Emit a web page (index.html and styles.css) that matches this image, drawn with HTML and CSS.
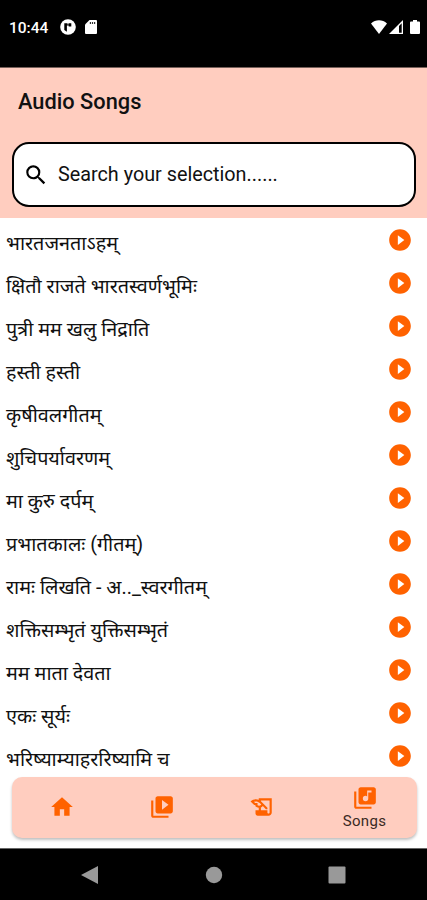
FILE: index.html
```html
<!DOCTYPE html>
<html lang="sa">
<head>
    <meta charset="UTF-8">
    <meta name="viewport" content="width=device-width, initial-scale=1.0">
    <title>Audio Songs</title>
    <link rel="stylesheet" href="styles.css">
</head>
<body>
    <!-- shared icon -->
    <svg class="sprite">
        <symbol id="play" viewBox="0 0 24 24">
            <path d="M12 2C6.48 2 2 6.48 2 12s4.48 10 10 10 10-4.48 10-10S17.52 2 12 2zm-2 14.5v-9l6 4.5-6 4.5z"/>
        </symbol>
    </svg>

    <div class="status-bar">
        <span class="clock">10:44</span>
        <svg class="status-app" viewBox="0 0 16 16">
            <circle cx="8" cy="8" r="7.8" fill="#fff"/>
            <path d="M4.3 4.2h3.2v1.300h1V4.200h2.800v3.200H8.700v-1H6.900v6.400L4.300 11z" fill="#000"/>
        </svg>
        <svg class="status-sd" viewBox="0 0 12 14">
            <path d="M4.5 0H11a1 1 0 0 1 1 1v12a1 1 0 0 1-1 1H1a1 1 0 0 1-1-1V4.500z" fill="#fff"/>
            <path d="M4.8 2h1.200v2H4.800zM6.900 2H8.100v2H6.900zM9 2h1.200v2H9z" fill="#333"/>
        </svg>
        <span class="spacer"></span>
        <svg class="status-wifi" viewBox="0 0 16 14">
            <path d="M8 14 0 3.500C4.500-.8 11.500-.8 16 3.500z" fill="#fff"/>
        </svg>
        <svg class="status-signal" viewBox="0 0 14 14">
            <path d="M14 0v14H0z" fill="#fff"/>
            <path d="M10 6 12.700 3.300V12.700H10z" fill="#000"/>
        </svg>
        <svg class="status-battery" viewBox="0 0 10 14">
            <path d="M3 0h4v1.500h2a1 1 0 0 1 1 1V13a1 1 0 0 1-1 1H1a1 1 0 0 1-1-1V2.500a1 1 0 0 1 1-1h2z" fill="#fff"/>
        </svg>
    </div>

    <header class="header">
        <h1 class="title">Audio Songs</h1>
        <div class="search">
            <svg class="search-icon" viewBox="0 0 24 24">
                <path d="M15.5 14h-.79l-.28-.27A6.471 6.471 0 0 0 16 9.5 6.5 6.5 0 1 0 9.5 16c1.61 0 3.09-.59 4.23-1.57l.27.28v.79l5 4.99L20.49 19l-4.99-5zm-6 0C7.01 14 5 11.99 5 9.5S7.01 5 9.5 5 14 7.01 14 9.5 11.99 14 9.5 14z"/>
            </svg>
            <span class="search-text">Search your selection......</span>
        </div>
    </header>

    <main class="content">
        <ul class="song-list">
            <li class="song"><span class="song-name">भारतजनताऽहम्</span><svg class="play"><use href="#play"/></svg></li>
            <li class="song"><span class="song-name">क्षितौ राजते भारतस्वर्णभूमिः</span><svg class="play"><use href="#play"/></svg></li>
            <li class="song"><span class="song-name">पुत्री मम खलु निद्राति</span><svg class="play"><use href="#play"/></svg></li>
            <li class="song"><span class="song-name">हस्ती हस्ती</span><svg class="play"><use href="#play"/></svg></li>
            <li class="song"><span class="song-name">कृषीवलगीतम्</span><svg class="play"><use href="#play"/></svg></li>
            <li class="song"><span class="song-name">शुचिपर्यावरणम्</span><svg class="play"><use href="#play"/></svg></li>
            <li class="song"><span class="song-name">मा कुरु दर्पम्</span><svg class="play"><use href="#play"/></svg></li>
            <li class="song"><span class="song-name">प्रभातकालः (गीतम्)</span><svg class="play"><use href="#play"/></svg></li>
            <li class="song"><span class="song-name">रामः लिखति - अ.._स्वरगीतम्</span><svg class="play"><use href="#play"/></svg></li>
            <li class="song"><span class="song-name">शक्तिसम्भृतं युक्तिसम्भृतं</span><svg class="play"><use href="#play"/></svg></li>
            <li class="song"><span class="song-name">मम माता देवता</span><svg class="play"><use href="#play"/></svg></li>
            <li class="song"><span class="song-name">एकः सूर्यः</span><svg class="play"><use href="#play"/></svg></li>
            <li class="song"><span class="song-name">भरिष्याम्याहररिष्यामि च</span><svg class="play"><use href="#play"/></svg></li>
        </ul>
    </main>

    <nav class="tabs">
        <a class="tab">
            <svg class="tab-icon" viewBox="0 0 24 24"><path d="M10 20v-6h4v6h5v-8h3L12 3 2 12h3v8z"/></svg>
        </a>
        <a class="tab">
            <svg class="tab-icon" viewBox="0 0 24 24"><path d="M4 6H2v14c0 1.1.9 2 2 2h14v-2H4V6zm16-4H8c-1.1 0-2 .9-2 2v12c0 1.1.9 2 2 2h12c1.1 0 2-.9 2-2V4c0-1.1-.9-2-2-2zm-8 12.500v-9l6 4.500-6 4.500z"/></svg>
        </a>
        <a class="tab">
            <svg class="tab-icon" viewBox="0 0 24 24"><path d="M9 4v1.380c-.83-.33-1.72-.5-2.61-.5-1.79 0-3.58.68-4.95 2.050l3.330 3.330h1.110v1.110c.86.86 1.980 1.310 3.110 1.360V15H6v3c0 1.1.9 2 2 2h10c1.660 0 3-1.340 3-3V4H9zm-1.110 6.410V8.260H5.610L4.570 7.220a5.070 5.070 0 0 1 1.820-.34c1.340 0 2.590.52 3.540 1.460l1.410 1.410-.2.2a2.700 2.700 0 0 1-1.920.8c-.47 0-.93-.12-1.330-.34zM19 17c0 .55-.45 1-1 1s-1-.45-1-1v-2h-6v-2.590c.57-.23 1.100-.57 1.560-1.030l.2-.2L15.590 14H17v-1.410l-6-5.970V6h8v11z"/></svg>
        </a>
        <a class="tab active">
            <svg class="tab-icon" viewBox="0 0 24 24"><path d="M20 2H8c-1.1 0-2 .9-2 2v12c0 1.1.9 2 2 2h12c1.1 0 2-.9 2-2V4c0-1.1-.9-2-2-2zm-2 5h-3v5.500a2.500 2.500 0 1 1-2.500-2.500c.57 0 1.080.19 1.500.51V5h4v2zM4 6H2v14c0 1.1.9 2 2 2h14v-2H4V6z"/></svg>
            <span class="tab-label">Songs</span>
        </a>
    </nav>

    <div class="system-nav">
        <svg class="sys-icon" viewBox="0 0 18 18"><path d="M17 0v18L0 9z"/></svg>
        <svg class="sys-icon" viewBox="0 0 18 18"><circle cx="9" cy="9" r="8.2"/></svg>
        <svg class="sys-icon" viewBox="0 0 18 18"><rect x=".5" y=".5" width="17" height="17" rx="1"/></svg>
    </div>
</body>
</html>
```
FILE: styles.css
```css
* {
    margin: 0;
    padding: 0;
    box-sizing: border-box;
}

body {
    height: 900px;
    display: flex;
    flex-direction: column;
    overflow: hidden;
    background: #fff;
    color: #111;
    font-family: Roboto, "Noto Sans", sans-serif;
}

.sprite {
    display: none;
}

/* status bar */
.status-bar {
    height: 68px;
    flex: none;
    display: flex;
    align-items: flex-start;
    padding: 20px 7px 0 9px;
    background: #000;
    border-bottom: 1px solid #76605a;
}

.clock {
    width: 51px;
    color: #fff;
    font-size: 15.5px;
    font-weight: 500;
    line-height: 16px;
}

.status-app {
    width: 16px;
    height: 16px;
    margin-top: -1px;
}

.status-sd {
    width: 12px;
    height: 14px;
    margin-left: 9px;
}

.spacer {
    flex: 1;
}

.status-wifi {
    width: 16px;
    height: 14px;
}

.status-signal {
    width: 14px;
    height: 14px;
    margin-left: 2px;
}

.status-battery {
    width: 10px;
    height: 14px;
    margin-left: 7px;
}

/* header */
.header {
    height: 150px;
    flex: none;
    padding: 20px 11px 0 12px;
    background: #ffcdbf;
}

.title {
    height: 54px;
    padding-left: 6px;
    font-size: 21.8px;
    font-weight: 500;
    line-height: 28px;
}

.search {
    height: 65px;
    display: flex;
    align-items: center;
    padding-left: 9px;
    background: #fff;
    border: 2px solid #000;
    border-radius: 17px;
}

.search-icon {
    width: 26px;
    height: 26px;
}

.search-text {
    margin-left: 9px;
    font-size: 19.8px;
}

/* songs */
.content {
    flex: 1;
    min-height: 0;
    overflow: hidden;
}

.song {
    height: 43px;
    display: flex;
    align-items: center;
    justify-content: space-between;
    padding: 0 14px 0 6px;
}

.song-name {
    font-size: 19.8px;
    line-height: 35px;
    padding-top: 8px;
    white-space: nowrap;
}

.play {
    width: 26px;
    height: 26px;
    fill: #ff6200;
}

/* bottom tabs */
.tabs {
    height: 61px;
    flex: none;
    display: flex;
    margin: 1px 10px 10px 12px;
    background: #ffcdbf;
    border-radius: 10px;
    box-shadow: 0 2px 3px rgba(0, 0, 0, 0.25);
}

.tab {
    width: 100px;
    display: flex;
    flex-direction: column;
    align-items: center;
    justify-content: center;
    padding-bottom: 2px;
}

.tab.active {
    flex: 1;
    padding-bottom: 0;
}

.tab-icon {
    width: 26px;
    height: 26px;
    fill: #ff6200;
}

.tab-label {
    font-size: 15px;
    line-height: 20px;
    letter-spacing: 0.3px;
    color: #3a2a24;
}

/* android buttons */
.system-nav {
    height: 52px;
    flex: none;
    display: flex;
    justify-content: space-between;
    align-items: center;
    padding: 0 81px;
    background: #000;
    border-top: 1px solid #666;
}

.sys-icon {
    width: 18px;
    height: 18px;
    fill: #999;
}
```
